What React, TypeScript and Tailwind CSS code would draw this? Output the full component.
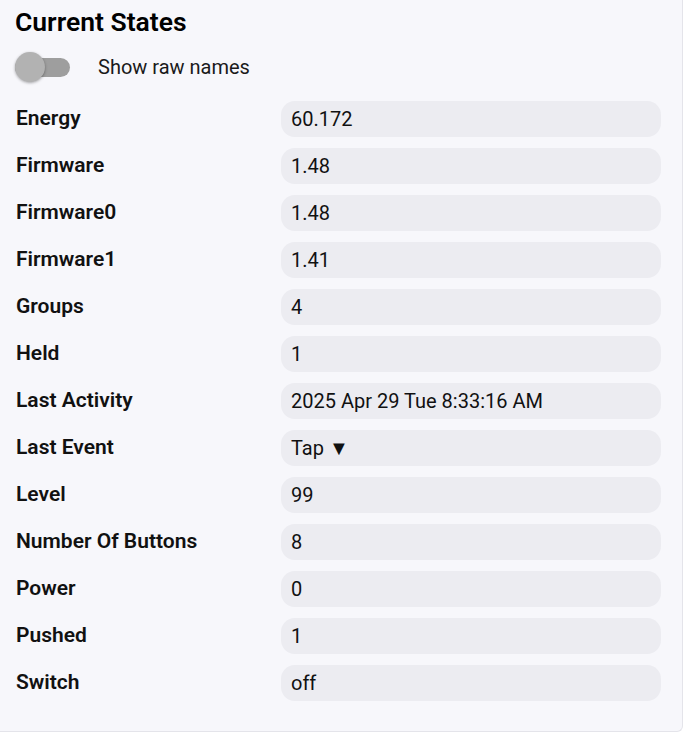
const rows: [string, string][] = [
  ["Energy", "60.172"],
  ["Firmware", "1.48"],
  ["Firmware0", "1.48"],
  ["Firmware1", "1.41"],
  ["Groups", "4"],
  ["Held", "1"],
  ["Last Activity", "2025 Apr 29 Tue 8:33:16 AM"],
  ["Last Event", "Tap ▼"],
  ["Level", "99"],
  ["Number Of Buttons", "8"],
  ["Power", "0"],
  ["Pushed", "1"],
  ["Switch", "off"],
];

export default function App() {
  return (
    <div className="w-[690px] h-[735px] bg-white" style={{ fontFamily: "Roboto, 'Liberation Sans', sans-serif" }}>
      <div className="w-[683px] h-[732px] bg-[#f7f7fb] border-r border-b border-[#e4e4ea] rounded-br-md pl-4 pr-[21px]">
        {/* header */}
        <h2 className="pt-[6px] -ml-px text-[26.5px] leading-8 font-semibold text-black">Current States</h2>
        <div className="mt-[14px] flex items-center h-[30px]">
          <div className="relative w-[55px] h-[30px] flex items-center shrink-0 -ml-px">
            <div className="w-[55px] h-[19px] rounded-full bg-[#9e9e9e]" />
            <div className="absolute left-0 top-0 w-[30px] h-[30px] rounded-full bg-[#b2b2b2] shadow-[0_1px_3px_rgba(0,0,0,0.35)]" />
          </div>
          <span className="ml-[28px] text-[20px] text-[#1a1a1a]">Show raw names</span>
        </div>

        {/* states */}
        <div className="mt-[19px] flex flex-col gap-[11px]">
          {rows.map(([label, value]) => (
            <div key={label} className="flex items-center h-9">
              <div className="w-[265px] shrink-0 text-[21px] font-semibold text-[#111]">{label}</div>
              <div className="flex-1 h-9 rounded-[14px] bg-[#ececf1] px-[10px] flex items-center text-[20px] text-[#111]">
                {value}
              </div>
            </div>
          ))}
        </div>
      </div>
    </div>
  );
}
